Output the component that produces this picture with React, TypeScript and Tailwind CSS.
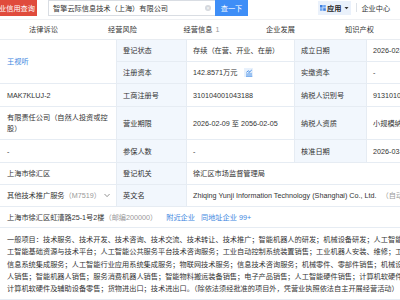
import React from 'react';

const cell = 'border-b border-r border-[#e6ecf3] px-[6px] flex items-center';
const label = cell + ' bg-[#f2f7fd]';

const tabs = [
  { id: 'legal', title: '法律诉讼' },
  { id: 'risk', title: '经营风险' },
  { id: 'ops', title: '经营信息', count: 1 },
  { id: 'dev', title: '企业发展' },
  { id: 'ip', title: '知识产权' },
];

const scopeLines = [
  '一般项目：技术服务、技术开发、技术咨询、技术交流、技术转让、技术推广；智能机器人的研发；机械设备研发；人工智能硬件销售；人',
  '工智能基础资源与技术平台；人工智能公共服务平台技术咨询服务；工业自动控制系统装置销售；工业机器人安装、维修；工业机器',
  '信息系统集成服务；人工智能行业应用系统集成服务；物联网技术服务；信息技术咨询服务；机械零件、零部件销售；机械设备销售；',
  '人销售；智能机器人销售；服务消费机器人销售；智能物料搬运装备销售；电子产品销售；人工智能硬件销售；计算机软硬件及辅助设备批发；',
  '计算机软硬件及辅助设备零售；货物进出口；技术进出口。（除依法须经批准的项目外，凭营业执照依法自主开展经营活动）',
];

const ChartIcon = () => (
  <span className="ml-[7px] w-[9px] h-[9px] bg-[#e8f1fc] flex items-center justify-center">
    <svg width="8" height="8" viewBox="0 0 8 8" fill="none" stroke="#3d8ae6" strokeWidth="0.9">
      <path d="M1 7.2h6.2" />
      <path d="M2 6.5V4.2M4 6.5V3M6 6.5V3.8" />
      <path d="M1.4 3.4 3.3 1.8 4.8 2.8 6.8 1" />
    </svg>
  </span>
);

export default function App() {
  return (
    <div className="w-[400px] h-[300px] overflow-hidden bg-white text-[#333] text-[7.2px] leading-[11px] font-['Liberation_Sans','Noto_Sans_CJK_SC',sans-serif]">
      <div className="w-[460px]">
        {/* header */}
        <div className="h-[20px] flex items-start border-b border-[#eef0f3]">
          <div className="w-[37px] h-[16px] bg-[#e04b3c] overflow-hidden flex items-center justify-end pr-[2px]">
            <span className="whitespace-nowrap text-white">企业信用查询</span>
          </div>
          <div className="ml-[11px] w-[167px] h-[16px] border border-[#d9dde3] border-r-0 flex items-center pl-[4px]">
            <span className="flex-1 whitespace-nowrap">智擎云际信息技术（上海）有限公司</span>
            <span className="w-[6px] h-[6px] rounded-full bg-[#d5d8dd] mr-[4px] flex items-center justify-center text-white text-[5px] leading-none">×</span>
          </div>
          <div className="w-[33px] h-[16px] bg-[#3e8ef7] text-white flex items-center justify-center">查一下</div>
          <div className="ml-[70px] h-[14px] mt-[1px] px-[2px] bg-[#eaf1fb] flex items-center">
            <svg width="6" height="6" viewBox="0 0 6 6" className="mr-[1px]">
              <rect x="0" y="0" width="2.6" height="2.6" fill="#3d7fe0" />
              <rect x="3.2" y="0" width="2.6" height="2.6" fill="#6fa6f0" />
              <rect x="0" y="3.2" width="2.6" height="2.6" fill="#6fa6f0" />
              <rect x="3.2" y="3.2" width="2.6" height="2.6" fill="#3d7fe0" />
            </svg>
            <span className="font-bold text-[#222]">应用</span>
            <svg width="5" height="4" viewBox="0 0 5 4" className="ml-[3px]">
              <path d="M0.5 1h4L2.5 3.2z" fill="#333" />
            </svg>
          </div>
          <div className="ml-[5px] mt-[3px] h-[9px] border-l border-[#dde2e8]" />
          <div className="ml-[4px] h-[14px] mt-[1px] flex items-center whitespace-nowrap">企业中心</div>
        </div>

        {/* tabs */}
        <div className="h-[20px] border-b border-[#e8ecf1] pl-[4px] grid grid-cols-[79px_79px_79px_79px_79px]">
          {tabs.map(t => (
            <div key={t.id} className="flex items-center justify-center whitespace-nowrap">
              {t.title}
              {t.count !== undefined && <span className="ml-[3px] text-[#999]">{t.count}</span>}
            </div>
          ))}
        </div>

        {/* detail table */}
        <div className="grid grid-cols-[117px_70px_108px_72px_1fr] grid-rows-[22px_22px_23px_33px_23px_22px_22px_21px_72px]">
          <div className={cell + ' row-span-2 pl-[7px] text-[#3d86e0]'}>王视听</div>
          <div className={label}>登记状态</div>
          <div className={cell + ' whitespace-nowrap'}>存续（在营、开业、在册）</div>
          <div className={label}>成立日期</div>
          <div className={cell + ' whitespace-nowrap'}>2026-02-04</div>

          <div className={label}>注册资本</div>
          <div className={cell + ' whitespace-nowrap'}>142.8571万元<ChartIcon /></div>
          <div className={label}>实缴资本</div>
          <div className={cell}>-</div>

          <div className={cell + ' pl-[7px]'}>MAK7KLUJ-2</div>
          <div className={label}>工商注册号</div>
          <div className={cell}>310104001043188</div>
          <div className={label}>纳税人识别号</div>
          <div className={cell}>91310104MAK7KLUJ2X</div>

          <div className={cell + ' pl-[7px]'}>
            <span className="whitespace-nowrap">有限责任公司（自然人投资或控<br />股）</span>
          </div>
          <div className={label}>营业期限</div>
          <div className={cell + ' whitespace-nowrap'}>2026-02-09 至 2056-02-05</div>
          <div className={label}>纳税人资质</div>
          <div className={cell + ' whitespace-nowrap'}>小规模纳税人</div>

          <div className={cell + ' pl-[7px]'}>-</div>
          <div className={label}>参保人数</div>
          <div className={cell}>-</div>
          <div className={label}>核准日期</div>
          <div className={cell}>2026-03-02</div>

          <div className={cell + ' pl-[7px]'}>上海市徐汇区</div>
          <div className={label}>登记机关</div>
          <div className={cell + ' col-span-3'}>徐汇区市场监督管理局</div>

          <div className={cell + ' pl-[7px] whitespace-nowrap'}>
            其他技术推广服务<span className="text-[#999]">（M7519）</span>
            <svg width="7" height="5" viewBox="0 0 7 5" className="ml-[3px]" fill="none" stroke="#666" strokeWidth="0.8">
              <path d="M0.6 0.8 3.5 3.8 6.4 0.8" />
            </svg>
          </div>
          <div className={label}>英文名</div>
          <div className={cell + ' col-span-3 whitespace-nowrap'}>
            Zhiqing Yunji Information Technology (Shanghai) Co., Ltd.
            <span className="ml-[5px] text-[#999]">（自动翻译）</span>
          </div>

          <div className={cell + ' col-span-5 pl-[7px] whitespace-nowrap'}>
            上海市徐汇区虹漕路25-1号2楼<span className="text-[#999]">（邮编200000）</span>
            <span className="ml-[9px] text-[#3d86e0]">附近企业</span>
            <span className="ml-[6px] text-[#3d86e0]">同地址企业 99+</span>
          </div>

          <div className="col-span-5 border-b border-[#e6ecf3] pl-[7px] pt-[6px] leading-[12.3px]">
            {scopeLines.map((line, i) => (
              <div key={i} className="whitespace-nowrap">{line}</div>
            ))}
          </div>
        </div>
      </div>
    </div>
  );
}
